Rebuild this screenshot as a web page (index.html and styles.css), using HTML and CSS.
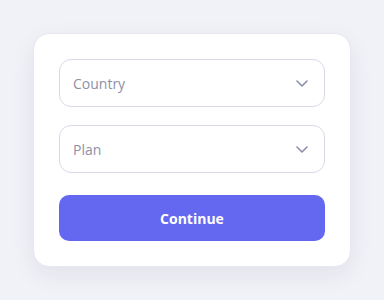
FILE: index.html
```html
<!DOCTYPE html>
<html lang="en">
<head>
  <meta charset="UTF-8">
  <meta name="viewport" content="width=device-width, initial-scale=1.0">
  <title>Choose plan</title>
  <link rel="stylesheet" href="styles.css">
</head>
<body>

<div class="card">
  <div class="select">
    <span class="placeholder">Country</span>
    <svg class="chevron" width="12" height="7" viewBox="0 0 12 7"><path d="M1 1l5 5 5-5" fill="none" stroke="#8b8fa8" stroke-width="1.6" stroke-linecap="round" stroke-linejoin="round"/></svg>
  </div>

  <div class="select">
    <span class="placeholder">Plan</span>
    <svg class="chevron" width="12" height="7" viewBox="0 0 12 7"><path d="M1 1l5 5 5-5" fill="none" stroke="#8b8fa8" stroke-width="1.6" stroke-linecap="round" stroke-linejoin="round"/></svg>
  </div>

  <button class="btn">Continue</button>
</div>

</body>
</html>
```

FILE: styles.css
```css
* {
  margin: 0;
  padding: 0;
  box-sizing: border-box;
  font-family: 'Open Sans', 'Noto Sans', sans-serif;
}

body {
  background: #f1f2f7;
  height: 300px;
  display: flex;
  justify-content: center;
  align-items: center;
}

.card {
  width: 318px;
  background: #fff;
  border: 1px solid #e6e7ef;
  border-radius: 16px;
  padding: 25px;
  display: flex;
  flex-direction: column;
  box-shadow: 0 8px 24px rgba(30, 35, 70, 0.07);
}

.select {
  height: 48px;
  border: 1px solid #d9d9e6;
  border-radius: 12px;
  display: flex;
  align-items: center;
  justify-content: space-between;
  padding: 0 16px 0 13px;
  margin-bottom: 18px;
}

.placeholder {
  font-size: 14px;
  color: #8e90a6;
}

.chevron {
  display: block;
}

.btn {
  margin-top: 4px;
  height: 46px;
  border: none;
  border-radius: 10px;
  background: #6468f1;
  color: #fff;
  font-size: 14px;
  font-weight: 700;
  cursor: pointer;
}
```
